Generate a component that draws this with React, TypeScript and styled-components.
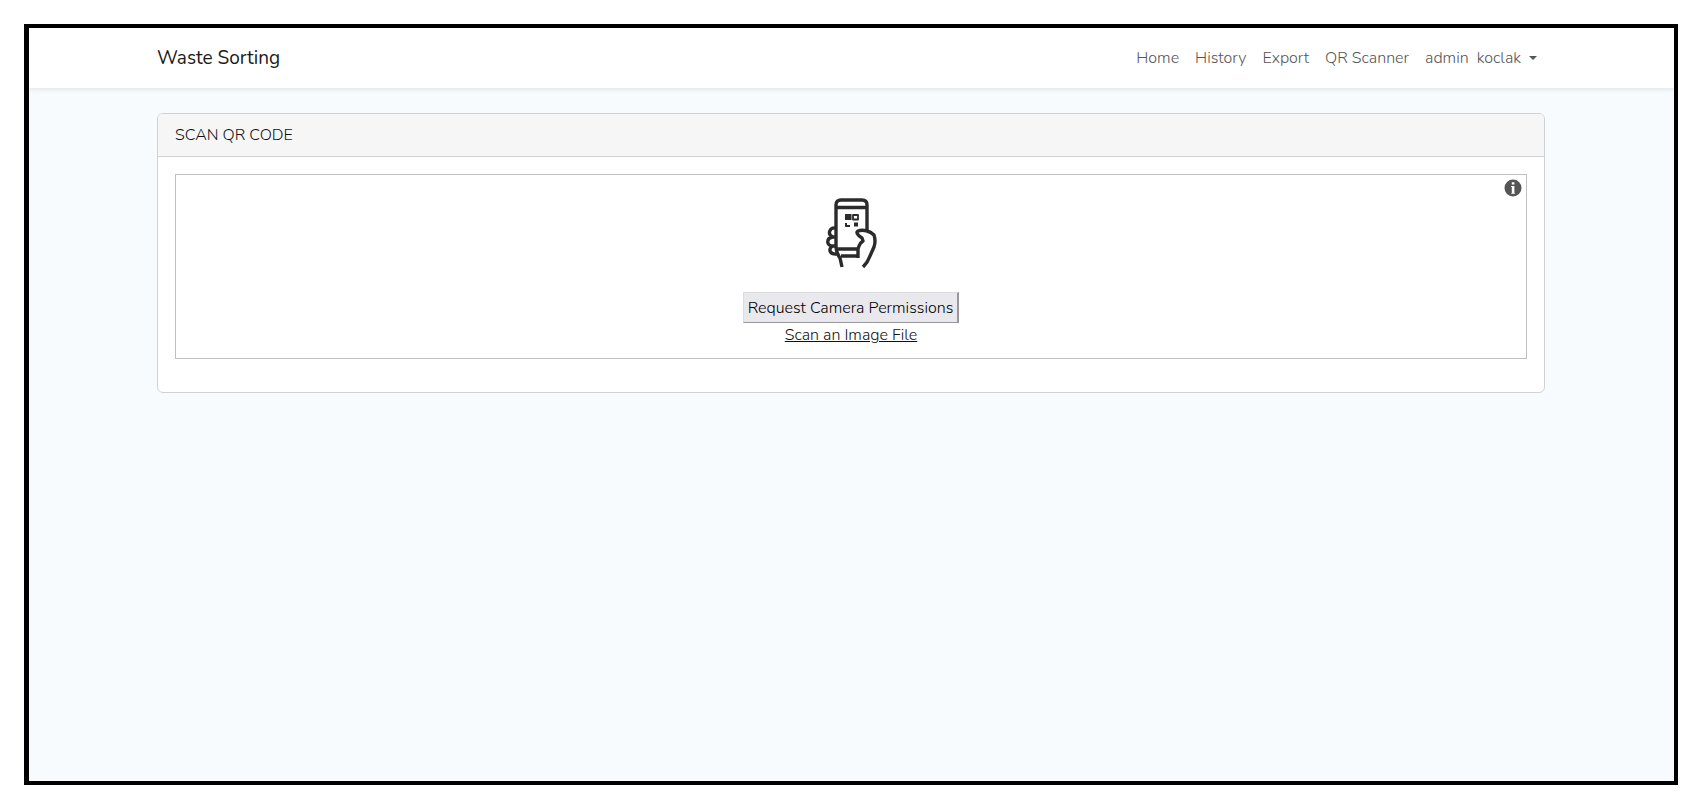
import React from "react";
import styled, { createGlobalStyle } from "styled-components";

const GlobalStyle = createGlobalStyle`
  *, *::before, *::after { box-sizing: border-box; }
  body {
    margin: 0;
    background: #fff;
    color: #111;
    font-family: Nunito, Lato, "Liberation Sans", sans-serif;
    font-size: 16px;
    font-weight: 300;
    line-height: 24px;
  }
`;

const Page = styled.div`
  display: flex;
  min-height: 100vh;
  padding: 24px 28px 23px 24px;
`;

const Frame = styled.div`
  flex: 1;
  border: 4px solid #000;
  border-left-width: 5px;
  background: #f8fbfe;
`;

const Navbar = styled.nav`
  padding: 0 129px 0 128px;
  background: #fff;
  box-shadow: 0 2px 4px rgba(0, 0, 0, 0.08);
`;

const NavInner = styled.div`
  display: flex;
  align-items: center;
  justify-content: space-between;
  min-height: 60px;
`;

const Brand = styled.a`
  color: #1a1a1a;
  font-size: 19px;
  font-weight: 400;
  text-decoration: none;
`;

const NavList = styled.ul`
  display: flex;
  gap: 16px;
  margin: 0;
  padding: 0 8px 0 0;
  list-style: none;
`;

const NavLink = styled.a`
  display: flex;
  align-items: center;
  color: #555;
  text-decoration: none;
  white-space: pre;
`;

const Caret = styled.span`
  margin-left: 8px;
  border: 4px solid transparent;
  border-top-color: currentColor;
  border-bottom: 0;
`;

const Main = styled.main`
  padding: 25px 129px 25px 128px;
`;

const Card = styled.section`
  overflow: hidden;
  border: 1px solid #cfd1d2;
  border-radius: 6px;
  background: #fff;
`;

const CardHeader = styled.h1`
  margin: 0;
  padding: 9px 17px;
  border-bottom: 1px solid #cfd1d2;
  background: #f6f6f6;
  font-size: 16px;
  font-weight: inherit;
`;

const CardBody = styled.div`
  padding: 17px 17px 33px;
`;

const Scanner = styled.div`
  position: relative;
  display: flex;
  flex-direction: column;
  align-items: center;
  padding: 22px 0 11px;
  border: 1px solid silver;
`;

const InfoButton = styled.button`
  position: absolute;
  top: 4px;
  right: 4px;
  display: flex;
  padding: 0;
  border: 0;
  background: none;
`;

const PermissionButton = styled.button`
  margin-top: 23px;
  padding: 3px 4px 2px;
  border: 1px solid;
  border-color: #dcdce0 #98989c #98989c #dcdce0;
  border-right-width: 2px;
  background: #e9e9ed;
  color: #000;
  font: inherit;
`;

const FileLink = styled.a`
  color: #111;
  text-decoration: underline;
`;

const links = ["Home", "History", "Export", "QR Scanner"];

const PhoneIcon = () => (
  <svg width="52" height="72" viewBox="0 0 52 72" fill="none" stroke="#2b2b2b" strokeWidth="3.4" strokeLinecap="butt" strokeLinejoin="round" aria-hidden="true">
    <path d="M11 51V8q0-5 5-5h21q5 0 5 5v26M11 10.500h31M11 52h22M16 59h18" />
    <path d="M11 31c-7-1-9 7-3 9-7 1-7 9 0 9-5 2-4 9 4 8M6 40h5M6 49h5M11 51q1 6 4 10l2 9" />
    <path d="M33 61v-9l1-3q1-3 4-5l-1-3c-5-3-6-6-4-7 5-2 12 0 16 4q2 6 0 12l-4 9q-2 6-7 11" />
    <rect x="20" y="17" width="6.500" height="6" fill="#2b2b2b" stroke="none" />
    <rect x="28" y="18" width="5" height="4.500" strokeWidth="1.800" />
    <path d="M21 26v3h4" strokeWidth="2" />
    <rect x="29" y="25.500" width="4" height="4" fill="#2b2b2b" stroke="none" />
  </svg>
);

const InfoIcon = () => (
  <svg width="18" height="18" viewBox="0 0 18 18" aria-hidden="true">
    <circle cx="9" cy="9" r="8.500" fill="#555" />
    <path d="M7.800 3.300h2.600v2.200H7.800zM7 7h3.400v7H11v.8H7.200V14h.6V8H7z" fill="#fff" />
  </svg>
);

export default function App() {
  return (
    <>
      <GlobalStyle />
      <Page>
        <Frame>
          <Navbar>
            <NavInner>
              <Brand href="#">Waste Sorting</Brand>
              <NavList>
                {links.map((label) => (
                  <li key={label}>
                    <NavLink href="#">{label}</NavLink>
                  </li>
                ))}
                <li>
                  <NavLink href="#" aria-haspopup="true">
                    {"admin  koclak"}
                    <Caret />
                  </NavLink>
                </li>
              </NavList>
            </NavInner>
          </Navbar>
          <Main>
            <Card>
              <CardHeader>SCAN QR CODE</CardHeader>
              <CardBody>
                <Scanner>
                  <InfoButton type="button" aria-label="About the scanner">
                    <InfoIcon />
                  </InfoButton>
                  <PhoneIcon />
                  <PermissionButton type="button">Request Camera Permissions</PermissionButton>
                  <FileLink href="#">Scan an Image File</FileLink>
                </Scanner>
              </CardBody>
            </Card>
          </Main>
        </Frame>
      </Page>
    </>
  );
}
